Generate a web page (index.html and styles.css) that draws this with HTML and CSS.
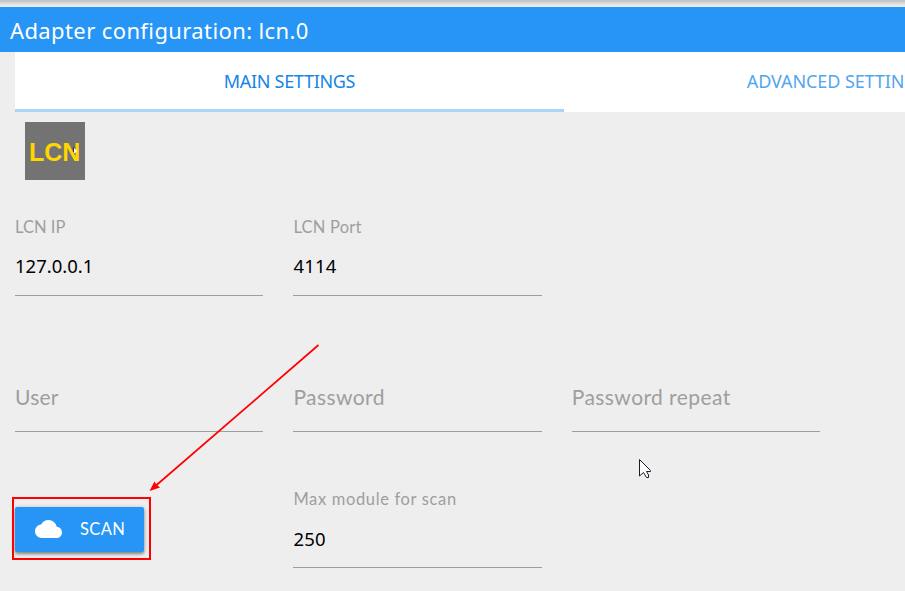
FILE: index.html
```html
<!DOCTYPE html>
<html lang="en">
<head>
<meta charset="utf-8">
<title>Adapter configuration</title>
<link rel="stylesheet" href="styles.css">
</head>
<body>
<div class="top-shadow"></div>
<header class="header"><span class="title">Adapter configuration: lcn.0</span></header>
<nav class="tabs">
  <a class="tab active"><span class="tab-main">MAIN SETTINGS</span></a>
  <a class="tab"><span class="tab-adv">ADVANCED SETTINGS</span></a>
</nav>
<main class="content">
  <div class="logo"><span>LCN</span>
    <svg class="mini-cursor" width="5" height="7" viewBox="0 0 5 7"><path d="M0 0h1v5H0z" fill="#333"/><path d="M1 1l3 3-2 2H1z" fill="#fff"/></svg>
  </div>
  <div class="row row-address">
    <div class="field"><label class="label"><span class="w-ip">LCN IP</span></label><div class="value">127.0.0.1</div></div>
    <div class="field"><label class="label"><span class="w-port">LCN Port</span></label><div class="value v-port">4114</div></div>
  </div>
  <div class="row row-login">
    <div class="field"><span class="placeholder p-user">User</span></div>
    <div class="field"><span class="placeholder">Password</span></div>
    <div class="field"><span class="placeholder">Password repeat</span></div>
  </div>
  <div class="row row-scan">
    <div class="action">
      <button class="scan"><svg width="27" height="18" viewBox="0 4 24 16" preserveAspectRatio="none"><path fill="#fff" d="M19.35 10.04C18.67 6.59 15.64 4 12 4 9.11 4 6.6 5.64 5.35 8.04 2.34 8.36 0 10.91 0 14c0 3.31 2.69 6 6 6h13c2.76 0 5-2.24 5-5 0-2.64-2.05-4.78-4.65-4.96z"/></svg><span>SCAN</span></button>
    </div>
    <div class="field"><label class="label"><span class="w-max">Max module for scan</span></label><div class="value v-max">250</div></div>
  </div>
</main>
<div class="highlight"></div>
<svg class="overlay" width="905" height="591" viewBox="0 0 905 591">
  <path d="M318.500 345L156 485.500" stroke="#f00" stroke-width="1.700" fill="none"/>
  <path d="M149.500 491L154.500 481.500 156 484 160 487.500z" fill="#f00"/>
  <path d="M639.500 459.500V476L643.500 472.500 646.500 477.500H648.500V475L646.500 471.500H650.500V470.500z" fill="#fff" stroke="#1c1a2b" stroke-width="1"/>
</svg>
</body>
</html>
```

FILE: styles.css
```css
* { box-sizing: border-box; }
body {
  margin: 0;
  height: 591px;
  overflow: hidden;
  position: relative;
  background: #eee;
  font-family: "Noto Sans", "Open Sans", sans-serif;
}
.top-shadow { height: 7px; background: linear-gradient(#c4c4c4 0 1px, #cecece 2px, #e2e2e2 4px, #eee 7px); }
.header { height: 45px; padding-left: 10px; background: #2795f5; color: #fff; font-size: 22px; line-height: 47px; white-space: nowrap; }
.title { letter-spacing: .39px; }
.tabs { display: flex; width: 1098px; height: 60px; margin-left: 15px; background: #fff; }
.tab { flex: 0 0 549px; text-align: center; font-size: 18px; line-height: 59px; color: #52a6ee; white-space: nowrap; }
.tab.active { color: #1684e5; border-bottom: 3px solid #a9d5fa; }
.tab-main { letter-spacing: -.3px; }
.tab-adv { letter-spacing: -.1px; margin-left: -3px; }
.content { padding: 10px 15px 0; }
.logo { position: relative; width: 60px; height: 58px; margin-left: 10px; background: #737374; color: #ffd600; font: bold 25px/60px "Liberation Sans", Arial, sans-serif; padding-left: 4px; }
.mini-cursor { position: absolute; left: 48px; top: 25px; }
.row { display: flex; gap: 30px; }
.field { width: 248.400px; border-bottom: 1px solid #9e9e9e; white-space: nowrap; }
.row-address { margin-top: 35px; }
.row-address .field, .row-scan .field { height: 81px; }
.label { display: block; height: 24px; font: 16.500px/24px Lato, sans-serif; color: #9e9e9e; }
.w-ip { letter-spacing: 0; }
.w-port { letter-spacing: .2px; }
.w-max { letter-spacing: .65px; }
.value { margin-top: 13px; height: 28px; font-size: 18.500px; line-height: 28px; color: #000; }
.v-port { letter-spacing: .2px; }
.v-max { margin-top: 14px; letter-spacing: .2px; }
.row-login { margin-top: 81px; }
.row-login .field { height: 55px; }
.placeholder { display: block; font: 21px/39px Lato, sans-serif; color: #9e9e9e; letter-spacing: .42px; }
.p-user { letter-spacing: .2px; }
.row-scan { margin-top: 55px; }
.action { width: 248.400px; padding-top: 20px; }
.scan { display: flex; align-items: center; gap: 18px; width: 129px; height: 45px; padding: 0 0 1px 20px; border: 0; border-radius: 2px; background: #2795f5; color: #fff; font: 16.500px/44px Lato, sans-serif; letter-spacing: .4px; box-shadow: 0 2px 3px rgba(0,0,0,.35), 0 1px 5px rgba(0,0,0,.2); }
.highlight { position: absolute; left: 12px; top: 497px; width: 139px; height: 63px; border: 2px solid #f00; }
.overlay { position: absolute; left: 0; top: 0; pointer-events: none; }
```
